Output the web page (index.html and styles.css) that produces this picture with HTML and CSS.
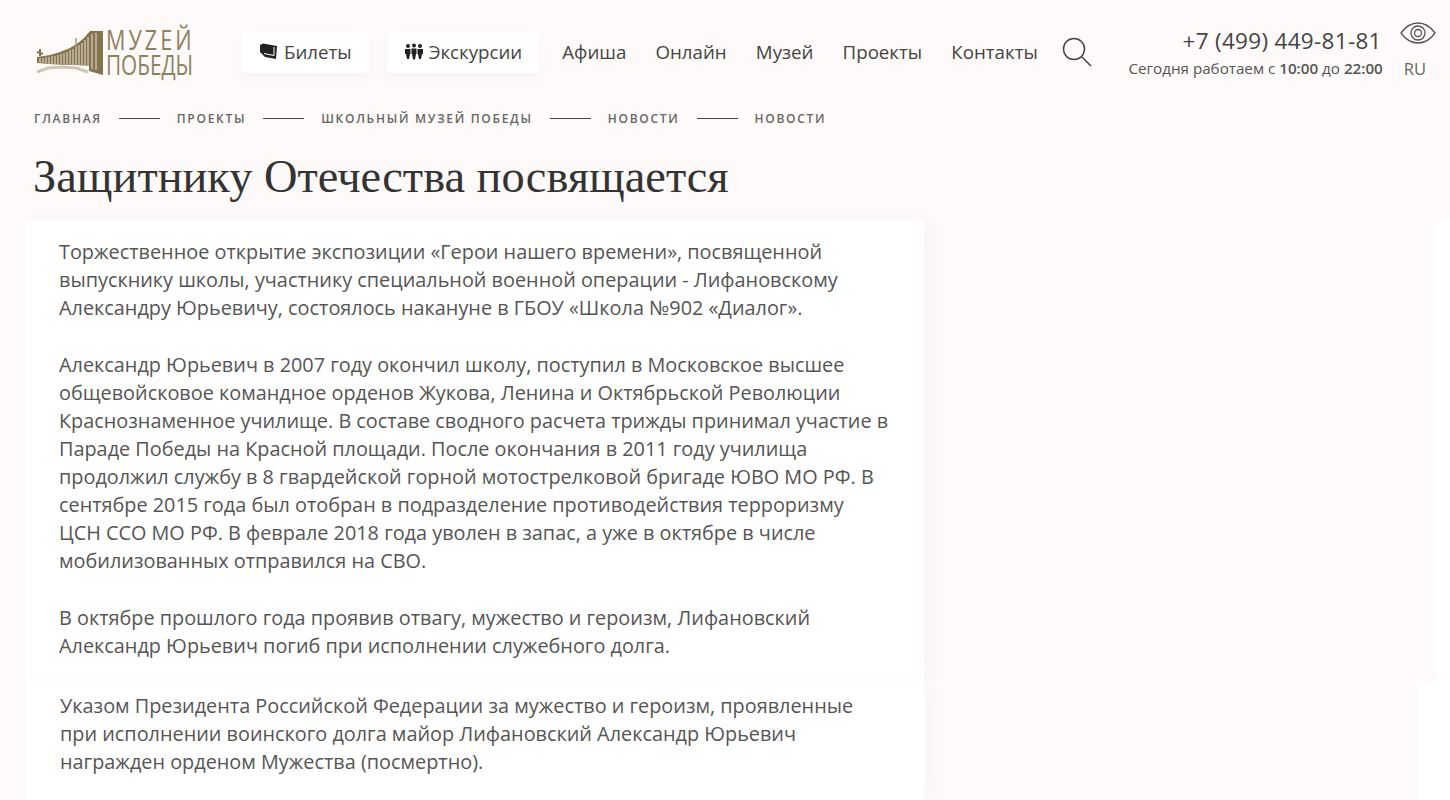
FILE: index.html
```html
<!DOCTYPE html>
<html lang="ru">
<head>
    <meta charset="UTF-8">
    <meta name="viewport" content="width=device-width, initial-scale=1.0">
    <title>Защитнику Отечества посвящается</title>
    <link rel="stylesheet" href="styles.css">
</head>
<body>
    <header class="site-header">
        <a class="logo" href="#">
            <svg class="logo-mark" width="69" height="45" viewBox="0 0 69 45">
                <path d="M69 1H56L50 8 44 13 36 18 26 22 16 25 3 27V33L16 34 29 35 42 35 55 36V41L69 45Z" fill="#84744f"/>
                <path d="M6 28V33M9 28V33M12 27V33M15 27V34M18 26V34M21 26V34M24 25V35M27 24V35M30 23V35M33 22V35M36 20V35M39 19V35M42 17V35M45 15V35M48 13V36M51 10V36M54 7V36M58 4V39M62 3V40" stroke="#e9e2d2" stroke-width="1"/>
                <path d="M3 42 14 38 28 37 42 38 54 42" fill="none" stroke="#cfc7b4" stroke-width="3"/>
                <path d="M6 26V19M3 22 9 24" stroke="#84744f" stroke-width="2" fill="none"/>
                <path d="M42 17V8" stroke="#a79a7d" stroke-width="1.500" fill="none"/>
            </svg>
            <span class="logo-text">
                <span class="logo-top">МУZЕЙ</span>
                <span class="logo-bottom">ПОБЕДЫ</span>
            </span>
        </a>
        <nav class="main-nav">
            <a class="nav-btn" href="#">
                <svg width="19" height="17" viewBox="0 0 19 17"><path d="M1 2 4 0.500 18 3 17 16 6 14 1 9Z" fill="#222"/><path d="M5 10.500 15 12.500V4" fill="none" stroke="#fff" stroke-width="1"/></svg>
                Билеты
            </a>
            <a class="nav-btn" href="#">
                <svg width="18" height="17" viewBox="0 0 18 17" fill="#222"><circle cx="3" cy="3" r="2"/><circle cx="9" cy="2.500" r="2"/><circle cx="15" cy="3" r="2"/><path d="M0 6H5.500V11H5L4 16H2L1 11H0ZM6.500 5.500H11.500V11H11L10 16.500H8L7 11H6.500ZM12.500 6H18V11H17L16 16H14L13 11H12.500Z"/></svg>
                Экскурсии
            </a>
            <a class="nav-link" href="#">Афиша</a>
            <a class="nav-link" href="#">Онлайн</a>
            <a class="nav-link" href="#">Музей</a>
            <a class="nav-link" href="#">Проекты</a>
            <a class="nav-link" href="#">Контакты</a>
            <svg class="search-icon" width="30" height="30" viewBox="0 0 30 30" fill="none" stroke="#444" stroke-width="1.500"><circle cx="12" cy="12" r="10.500"/><path d="M19.500 19.500 29 29"/></svg>
        </nav>
        <div class="contacts">
            <div class="phone">+7 (499) 449-81-81</div>
            <div class="hours">Сегодня работаем с <b>10:00</b> до <b>22:00</b></div>
        </div>
        <div class="tools">
            <svg width="36" height="22" viewBox="0 0 36 22" fill="none" stroke="#555" stroke-width="1.300"><path d="M1 11C6 4 12 1 18 1S30 4 35 11C30 18 24 21 18 21S6 18 1 11Z"/><circle cx="18" cy="11" r="7"/><circle cx="18" cy="11" r="3.500"/></svg>
            <span class="lang">RU</span>
        </div>
    </header>

    <div class="breadcrumbs">
        <a href="#">Главная</a><i></i>
        <a href="#">Проекты</a><i></i>
        <a href="#">Школьный музей Победы</a><i></i>
        <a href="#">Новости</a><i></i>
        <a href="#">Новости</a>
    </div>

    <h1>Защитнику Отечества посвящается</h1>

    <section class="band band-first">
        <div class="card">
            <p>Торжественное открытие экспозиции «Герои нашего времени», посвященной<br>выпускнику школы, участнику специальной военной операции - Лифановскому<br>Александру Юрьевичу, состоялось накануне в ГБОУ «Школа №902 «Диалог».</p>
            <p>Александр Юрьевич в 2007 году окончил школу, поступил в Московское высшее<br>общевойсковое командное орденов Жукова, Ленина и Октябрьской Революции<br>Краснознаменное училище. В составе сводного расчета трижды принимал участие в<br>Параде Победы на Красной площади. После окончания в 2011 году училища<br>продолжил службу в 8 гвардейской горной мотострелковой бригаде ЮВО МО РФ. В<br>сентябре 2015 года был отобран в подразделение противодействия терроризму<br>ЦСН ССО МО РФ. В феврале 2018 года уволен в запас, а уже в октябре в числе<br>мобилизованных отправился на СВО.</p>
            <p>В октябре прошлого года проявив отвагу, мужество и героизм, Лифановский<br>Александр Юрьевич погиб при исполнении служебного долга.</p>
        </div>
    </section>

    <section class="band band-second">
        <div class="card">
            <p>Указом Президента Российской Федерации за мужество и героизм, проявленные<br>при исполнении воинского долга майор Лифановский Александр Юрьевич<br>награжден орденом Мужества (посмертно).</p>
        </div>
    </section>
</body>
</html>
```

FILE: styles.css
```css
html {
    height: 100%;
    overflow: hidden;
}
body {
    margin: 0;
    height: 800px;
    overflow: hidden;
    background-color: #fefaf9;
    color: #444;
    font-family: "Open Sans", sans-serif;
}
a {
    color: inherit;
    text-decoration: none;
}
.site-header {
    display: flex;
    align-items: center;
    height: 104px;
    padding: 0 14px 0 34px;
    box-sizing: border-box;
}
.logo {
    display: flex;
    align-items: center;
    flex-shrink: 0;
    gap: 3px;
    width: 207px;
    color: #8f8060;
}
.logo-mark {
    flex-shrink: 0;
}
.logo-text {
    display: flex;
    flex-direction: column;
    font-size: 28px;
    line-height: 25px;
    white-space: nowrap;
}
.logo-top {
    transform: scaleX(0.77);
    transform-origin: left;
    letter-spacing: 4px;
}
.logo-bottom {
    transform: scaleX(0.74);
    transform-origin: left;
}
.main-nav {
    display: flex;
    align-items: center;
}
.nav-btn {
    display: flex;
    align-items: center;
    gap: 6px;
    box-sizing: border-box;
    height: 41px;
    padding: 0 17px 2px 18px;
    margin-right: 18px;
    background: #fff;
    border-radius: 4px;
    box-shadow: 0 6px 14px rgba(0, 0, 0, 0.03);
    font-size: 18.700px;
}
.nav-link {
    margin: 0 24.200px 2px 5px;
    font-size: 18.700px;
}
.contacts {
    margin-left: auto;
    padding-top: 3px;
    text-align: right;
}
.phone {
    font-size: 22.500px;
    line-height: 30px;
    letter-spacing: 0.300px;
    padding-right: 1px;
}
.hours {
    font-size: 15.200px;
    line-height: 25px;
    color: #555;
}
.hours b {
    font-weight: 600;
}
.tools {
    display: flex;
    flex-direction: column;
    align-items: center;
    gap: 14px;
    margin-left: 17px;
    margin-top: -2px;
}
.lang {
    margin-right: 6px;
    padding: 2px 4px;
    background: #fffdfc;
    font-size: 16.500px;
    line-height: 18px;
    color: #666;
}
.breadcrumbs {
    display: flex;
    align-items: center;
    height: 28px;
    padding-left: 34px;
    font-size: 12px;
    font-weight: 600;
    letter-spacing: 1.720px;
    text-transform: uppercase;
    color: #666;
}
.breadcrumbs i {
    width: 41px;
    height: 1px;
    margin: 0 17px;
    background: #444;
}
h1 {
    margin: 0;
    padding-left: 33px;
    height: 88px;
    line-height: 90px;
    font-family: "Liberation Serif", serif;
    font-size: 46.400px;
    font-weight: 400;
    color: #333;
}
.band {
    box-sizing: border-box;
}
.band-first {
    height: 461px;
    padding-left: 25px;
    border-right: 14px solid #fff;
}
.band-second {
    height: 119px;
    padding-left: 26px;
    border-right: 32px solid #fff;
    border-top: 1px solid #fff;
}
.card {
    box-sizing: border-box;
    width: 899px;
    height: 100%;
    padding: 18px 0 0 34px;
    background: #fff;
    box-shadow: 8px 0 20px rgba(0, 0, 0, 0.025);
    font-size: 19.850px;
    line-height: 28px;
    color: #555;
    white-space: nowrap;
}
.band-second .card {
    padding-top: 10px;
}
p {
    margin: 0 0 29px;
}
```
